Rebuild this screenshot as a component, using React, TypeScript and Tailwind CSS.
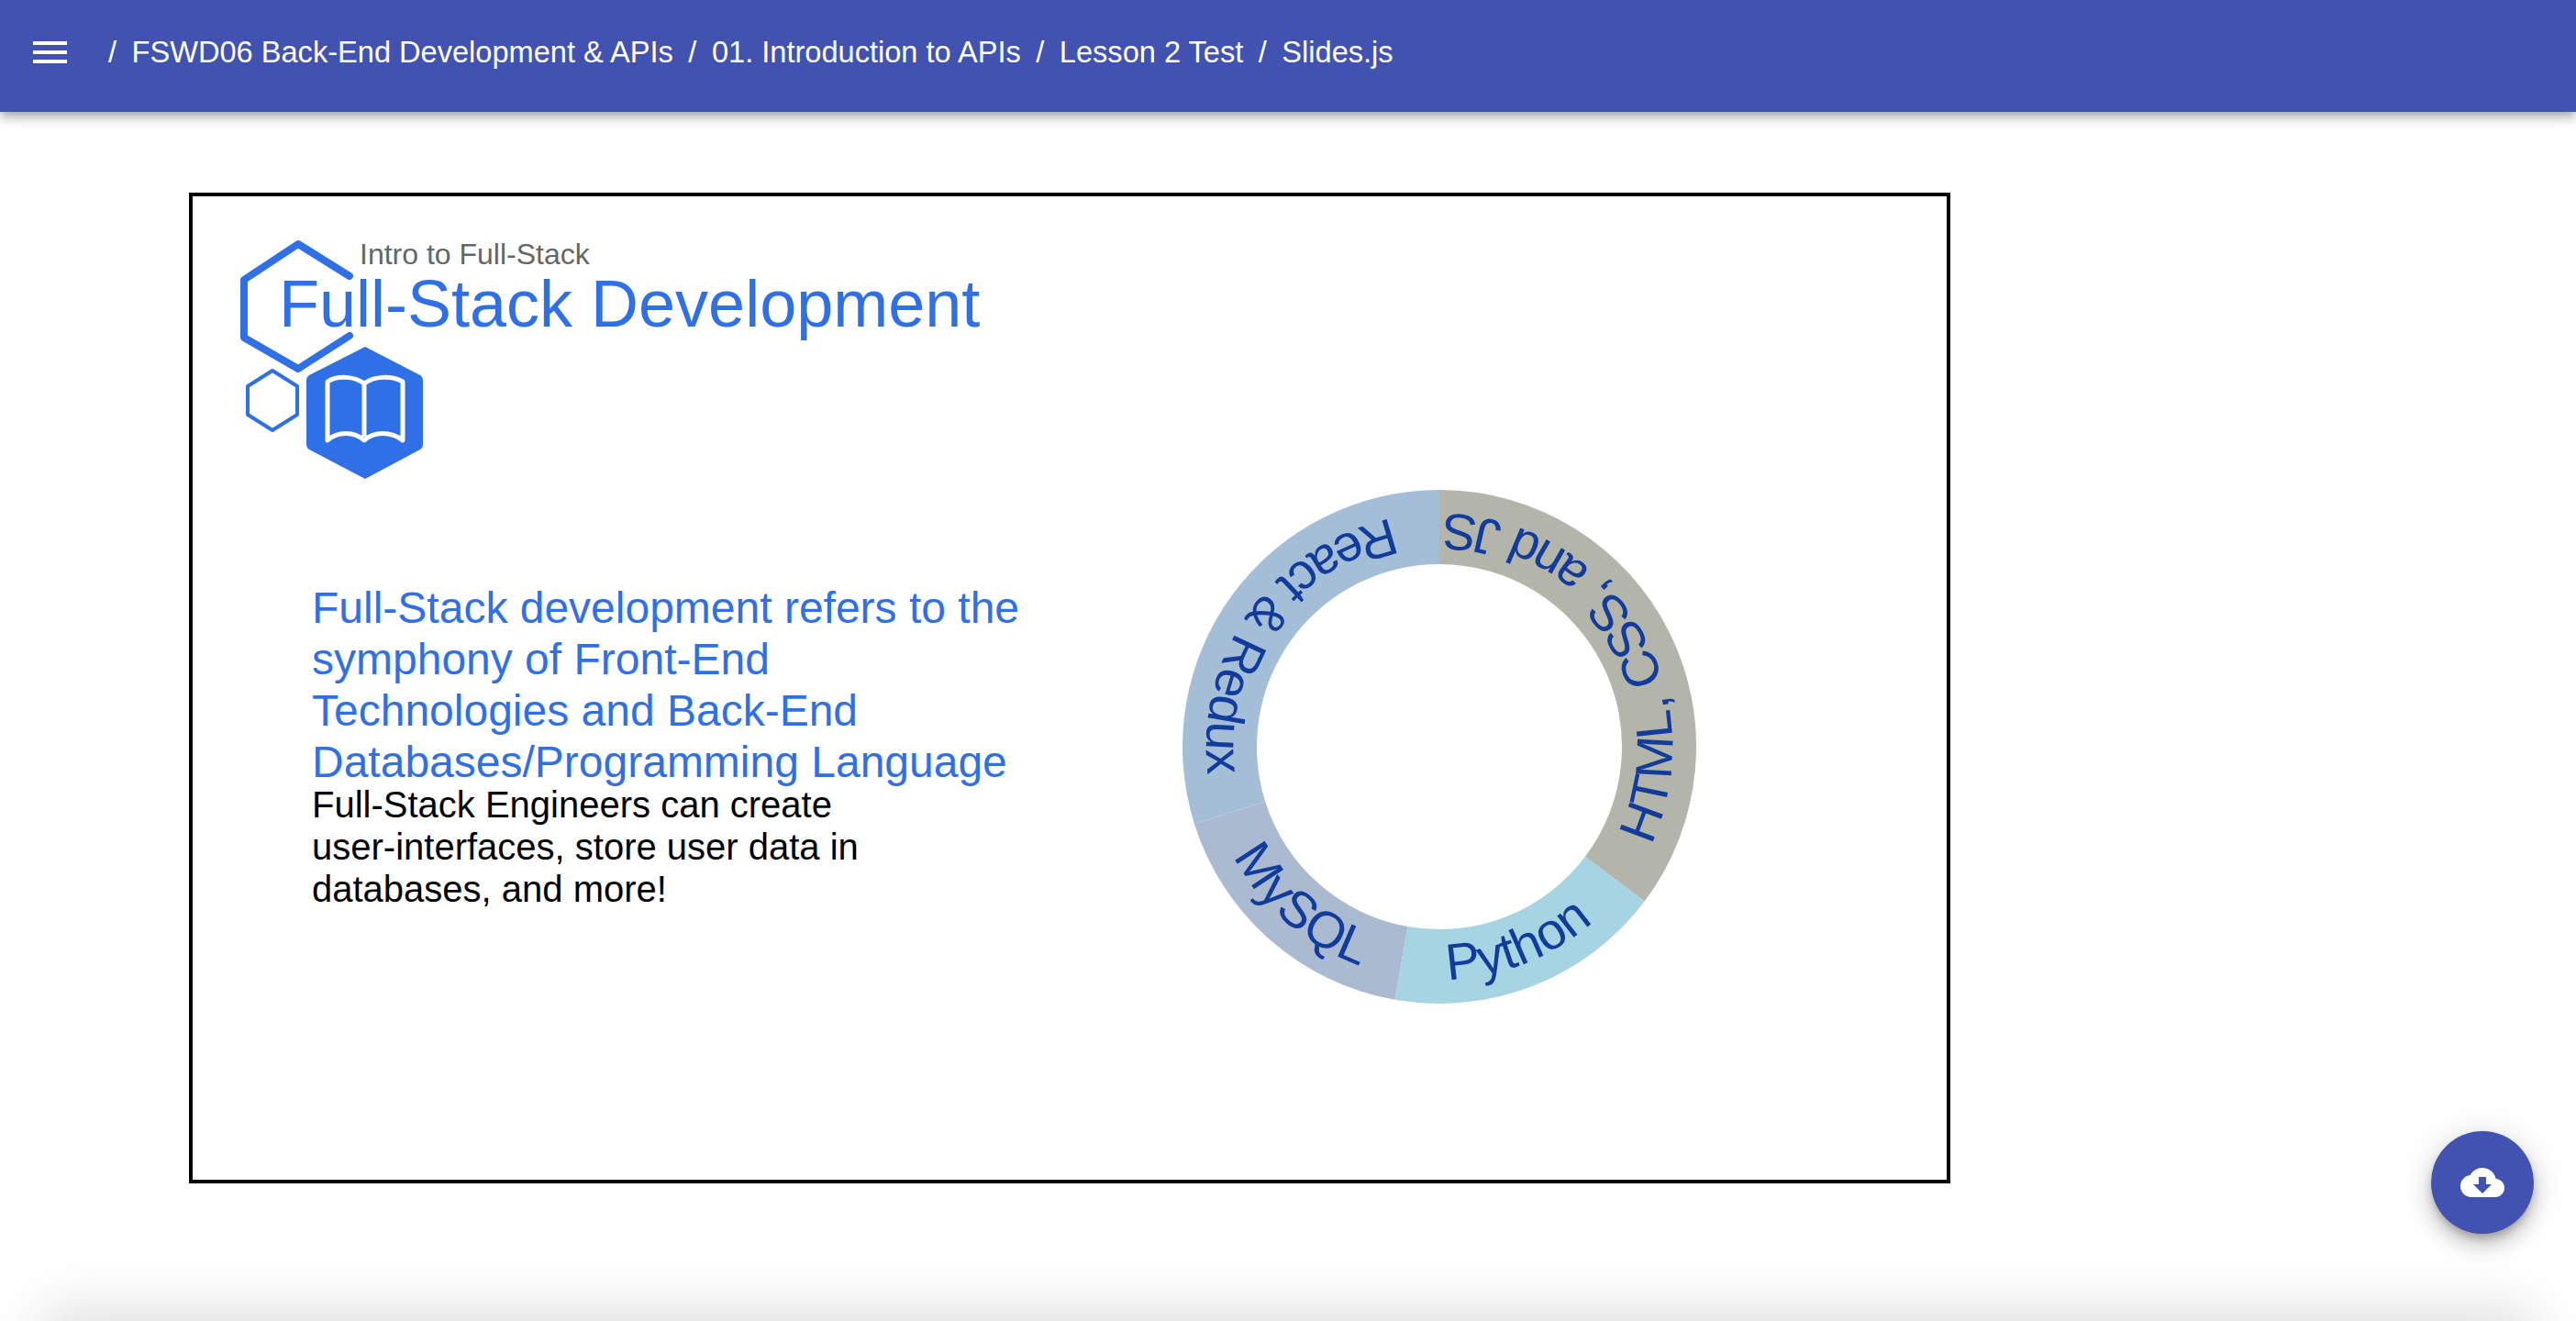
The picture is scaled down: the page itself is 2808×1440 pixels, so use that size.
import React from "react";

const CX = 300;
const CY = 300;
const pt = (r: number, deg: number) => {
  const a = (deg * Math.PI) / 180;
  return [CX + r * Math.sin(a), CY - r * Math.cos(a)];
};
const seg = (a: number, b: number, R = 280, I = 199) => {
  const [x1, y1] = pt(R, a);
  const [x2, y2] = pt(R, b);
  const [x3, y3] = pt(I, b);
  const [x4, y4] = pt(I, a);
  const large = b - a > 180 ? 1 : 0;
  return `M${x1} ${y1}A${R} ${R} 0 ${large} 1 ${x2} ${y2}L${x3} ${y3}A${I} ${I} 0 ${large} 0 ${x4} ${y4}Z`;
};
const BR = 254;
const items = [
  { from: 0, to: 127, fill: "#b3b4aa", label: "HTML, CSS, and JS", start: 115 },
  { from: 127, to: 190, fill: "#a6d4e3", label: "Python", start: 178 },
  { from: 190, to: 252.5, fill: "#aabad0", label: "MySQL", start: 242 },
  { from: 252.5, to: 360, fill: "#a5bed7", label: "React & Redux", start: 348 },
];

function Donut() {
  return (
    <svg width="600" height="600" viewBox="0 0 600 600" className="block shrink-0 blur-[0.6px]">
      <defs>
        <path
          id="ring"
          d={`M${CX} ${CY - BR}A${BR} ${BR} 0 1 0 ${CX} ${CY + BR}A${BR} ${BR} 0 1 0 ${CX} ${CY - BR}`}
        />
      </defs>
      {items.map((s) => (
        <path key={s.label} d={seg(s.from, s.to)} fill={s.fill} />
      ))}
      {items.map((s) => (
        <text
          key={s.label + "t"}
          fill="#123c9c"
          fontSize="56"
          fontFamily="'Liberation Sans', Arial, sans-serif"
        >
          <textPath href="#ring" startOffset={((360 - s.start) * Math.PI * BR) / 180}>
            {s.label}
          </textPath>
        </text>
      ))}
    </svg>
  );
}

function Logo() {
  return (
    <svg
      width="220"
      height="280"
      viewBox="0 0 220 280"
      className="absolute left-[46px] top-[44px]"
      fill="none"
    >
      <path
        d="M125 43 L 69 8 L 10 47 L 10 110 L 69 144 L 125 108"
        stroke="#3070e6"
        strokeWidth="8"
        strokeLinecap="round"
        strokeLinejoin="round"
      />
      <path
        d="M41 146 L 68 163 L 68 194 L 41 211 L 14 194 L 14 163 Z"
        stroke="#3070e6"
        strokeWidth="4"
        strokeLinejoin="round"
      />
      <path
        d="M142 120 L 202 151 Q 205 153 205 157 L 205 226 Q 205 230 202 232 L 142 264 L 81 232 Q 78 230 78 226 L 78 157 Q 78 153 81 151 Z"
        fill="#3070e6"
      />
      <path
        d="M141 160 C 130 152 112 151 101 158 L 101 222 C 112 212 130 212 141 222 C 152 212 170 212 183 222 L 183 158 C 170 151 152 152 141 160 Z M141 160 L 141 218"
        stroke="#fff"
        strokeWidth="5"
        strokeLinejoin="round"
      />
    </svg>
  );
}

export default function App() {
  return (
    <div className="relative h-[1440px] w-full overflow-hidden bg-white font-['Liberation_Sans',Arial,sans-serif]">
      <header className="relative z-10 flex h-[122px] items-center bg-[#4152b0] pb-[8px] pl-[36px] text-[32.6px] text-white shadow-[0_4px_8px_-2px_rgba(0,0,0,0.2),0_8px_10px_0_rgba(0,0,0,0.14),0_2px_20px_0_rgba(0,0,0,0.12)]">
        <svg width="37" height="24" viewBox="0 0 37 24" className="mr-[45px] shrink-0" fill="#fff">
          <rect x="0" y="0" width="37" height="4" />
          <rect x="0" y="10" width="37" height="4" />
          <rect x="0" y="20" width="37" height="4" />
        </svg>
        <nav className="flex items-center gap-[16.5px] whitespace-nowrap">
          <span>/</span>
          <span>FSWD06 Back-End Development &amp; APIs</span>
          <span>/</span>
          <span>01. Introduction to APIs</span>
          <span>/</span>
          <span>Lesson 2 Test</span>
          <span>/</span>
          <span>Slides.js</span>
        </nav>
      </header>

      <main className="pl-[206px] pt-[88px]">
        <section className="relative h-[1080px] w-[1920px] border-4 border-black">
          <Logo />
          <div className="relative pt-[44px]">
            <p className="pl-[182px] text-[32px] leading-[39px] text-[#666666]">Intro to Full-Stack</p>
            <h1 className="-mt-[2px] pl-[94px] text-[72px] leading-[72px] text-[#3070e6]">
              Full-Stack Development
            </h1>
          </div>
          <div className="flex items-start">
            <div className="ml-[130px] mt-[268px] w-[780px]">
              <p className="text-[48px] leading-[56px] text-[#3070e6]">
                Full-Stack development refers to the symphony of Front-End Technologies and Back-End
                Databases/Programming Language
              </p>
              <p className="-mt-[5px] w-[640px] text-[40px] leading-[46px] text-black">
                Full-Stack Engineers can create user-interfaces, store user data in databases, and more!
              </p>
            </div>
            <div className="ml-[149px] mt-[147px]">
              <Donut />
            </div>
          </div>
        </section>
      </main>

      <button className="absolute left-[2650px] top-[1233px] flex h-[112px] w-[112px] items-center justify-center rounded-full bg-[#4152b0] shadow-[0_6px_10px_-2px_rgba(0,0,0,0.25),0_12px_20px_2px_rgba(0,0,0,0.14),0_4px_36px_4px_rgba(0,0,0,0.1)]">
        <svg width="48" height="48" viewBox="0 0 24 24" fill="#fff">
          <path d="M19.35 10.04C18.67 6.59 15.64 4 12 4 9.11 4 6.6 5.64 5.35 8.04 2.34 8.36 0 10.91 0 14c0 3.31 2.69 6 6 6h13c2.76 0 5-2.24 5-5 0-2.64-2.05-4.78-4.65-4.96zM17 13l-5 5-5-5h3V9h4v4h3z" />
        </svg>
      </button>

      <div className="mx-[56px] mt-[150px] h-[200px] bg-white shadow-[0_0_60px_10px_rgba(0,0,0,0.14)]" />
    </div>
  );
}
